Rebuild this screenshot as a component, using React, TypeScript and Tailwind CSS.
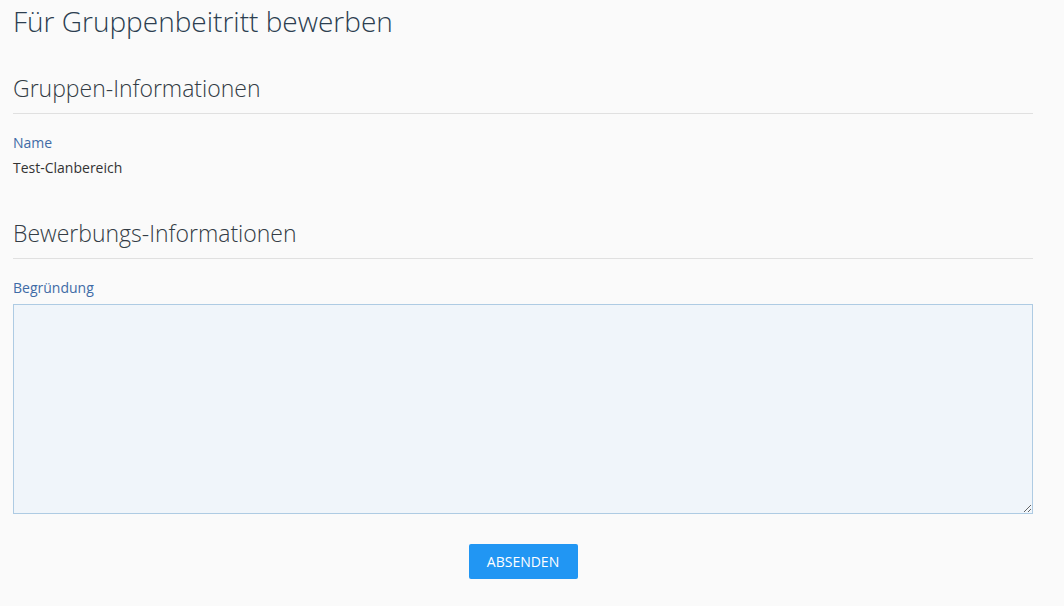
import React from 'react';

function SectionHeading({ children }: { children: React.ReactNode }) {
  return (
    <div className="border-b border-[#e0e0e0] pb-[10px]">
      <h2 className="text-[23px] font-light leading-[30px] text-[#333c45]">{children}</h2>
    </div>
  );
}

export default function App() {
  return (
    <div className="min-h-[606px] bg-[#fafafa] pl-[13px] pr-[31px] pt-[3px] font-['Open_Sans',sans-serif]">
      <h1 className="text-[28px] font-light leading-[36px] text-[#2c3e50]">Für Gruppenbeitritt bewerben</h1>

      <div className="mt-[34px]">
        <SectionHeading>Gruppen-Informationen</SectionHeading>
        <div className="mt-[19px]">
          <div className="text-[14px] leading-[20px] text-[#3f6ba6]">Name</div>
          <div className="mt-[5px] text-[14px] leading-[20px] text-[#333]">Test-Clanbereich</div>
        </div>
      </div>

      <div className="mt-[40px]">
        <SectionHeading>Bewerbungs-Informationen</SectionHeading>
        <div className="mt-[19px]">
          <div className="text-[14px] leading-[20px] text-[#3f6ba6]">Begründung</div>
          <textarea className="mt-[6px] block h-[210px] w-full border border-[#aecbe3] bg-[#f0f5fa] outline-none" />
        </div>
      </div>

      <div className="mt-[30px] flex justify-center">
        <button className="h-[35px] w-[109px] rounded-[2px] bg-[#2196f3] text-[14px] uppercase text-white">
          Absenden
        </button>
      </div>
    </div>
  );
}
